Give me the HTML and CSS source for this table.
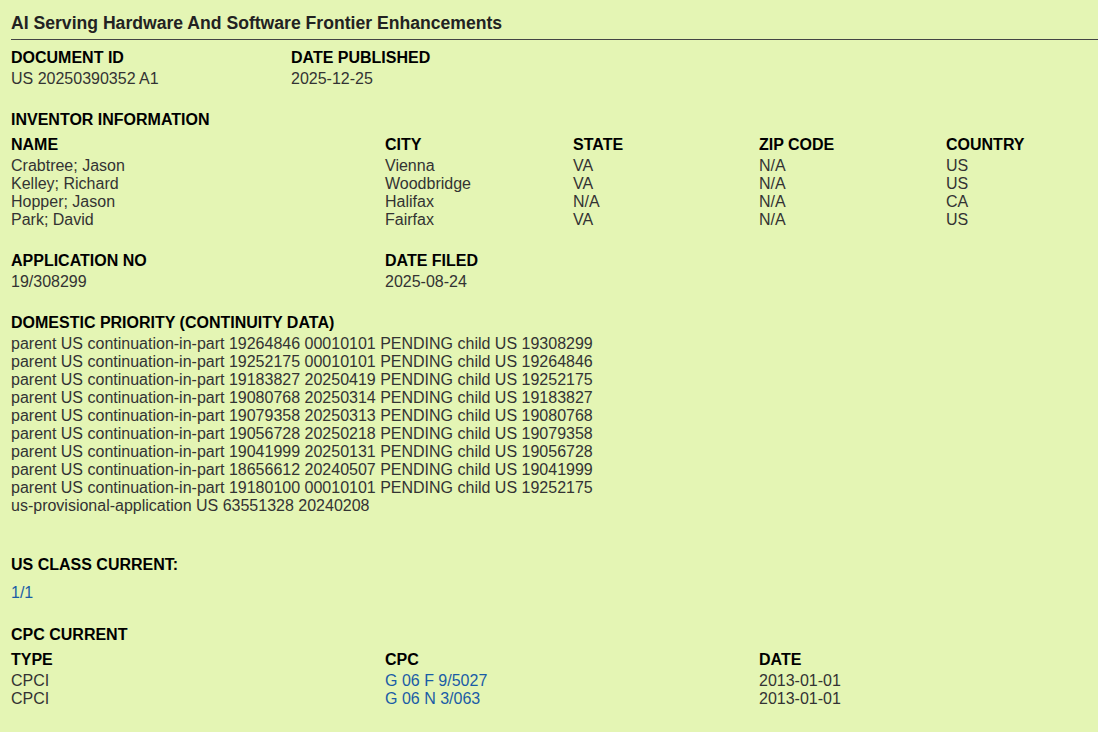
FILE: index.html
```html
<!DOCTYPE html>
<html>
<head>
<meta charset="utf-8">
<link rel="stylesheet" href="styles.css">
</head>
<body>
<div class="page">
  <h1 class="title">AI Serving Hardware And Software Frontier Enhancements</h1>

  <div class="grid grid-doc section">
    <div class="hd">DOCUMENT ID</div>
    <div class="hd">DATE PUBLISHED</div>
    <div>US 20250390352 A1</div>
    <div>2025-12-25</div>
  </div>

  <div class="sec-title">INVENTOR INFORMATION</div>
  <div class="grid grid-inv section">
    <div class="hd">NAME</div><div class="hd">CITY</div><div class="hd">STATE</div><div class="hd">ZIP CODE</div><div class="hd">COUNTRY</div>
    <div>Crabtree; Jason</div><div>Vienna</div><div>VA</div><div>N/A</div><div>US</div>
    <div>Kelley; Richard</div><div>Woodbridge</div><div>VA</div><div>N/A</div><div>US</div>
    <div>Hopper; Jason</div><div>Halifax</div><div>N/A</div><div>N/A</div><div>CA</div>
    <div>Park; David</div><div>Fairfax</div><div>VA</div><div>N/A</div><div>US</div>
  </div>

  <div class="grid grid-app section">
    <div class="hd">APPLICATION NO</div>
    <div class="hd">DATE FILED</div>
    <div>19/308299</div>
    <div>2025-08-24</div>
  </div>

  <div class="hd">DOMESTIC PRIORITY (CONTINUITY DATA)</div>
  <div class="lines section-lg">
    <div>parent US continuation-in-part 19264846 00010101 PENDING child US 19308299</div>
    <div>parent US continuation-in-part 19252175 00010101 PENDING child US 19264846</div>
    <div>parent US continuation-in-part 19183827 20250419 PENDING child US 19252175</div>
    <div>parent US continuation-in-part 19080768 20250314 PENDING child US 19183827</div>
    <div>parent US continuation-in-part 19079358 20250313 PENDING child US 19080768</div>
    <div>parent US continuation-in-part 19056728 20250218 PENDING child US 19079358</div>
    <div>parent US continuation-in-part 19041999 20250131 PENDING child US 19056728</div>
    <div>parent US continuation-in-part 18656612 20240507 PENDING child US 19041999</div>
    <div>parent US continuation-in-part 19180100 00010101 PENDING child US 19252175</div>
    <div>us-provisional-application US 63551328 20240208</div>
  </div>

  <div class="sec-title uscl">US CLASS CURRENT:</div>
  <div class="uscl-val"><a class="link" href="#">1/1</a></div>

  <div class="sec-title">CPC CURRENT</div>
  <div class="grid grid-cpc">
    <div class="hd">TYPE</div><div class="hd">CPC</div><div class="hd">DATE</div>
    <div>CPCI</div><div><a class="link" href="#">G 06 F 9/5027</a></div><div>2013-01-01</div>
    <div>CPCI</div><div><a class="link" href="#">G 06 N 3/063</a></div><div>2013-01-01</div>
  </div>
</div>
</body>
</html>
```

FILE: styles.css
```css
html, body {
  margin: 0;
  padding: 0;
  background: #e4f5b4;
}
body {
  font-family: "Liberation Sans", Arial, sans-serif;
  font-size: 16px;
  color: #333;
}
.page {
  padding: 0 0 20px 11px;
}
.title {
  font-size: 17.6px;
  font-weight: bold;
  color: #222;
  margin: 0;
  padding: 13px 0 6px;
  line-height: 20px;
  border-bottom: 1px solid #444;
}
.grid {
  display: grid;
  line-height: 18px;
}
.grid-doc {
  grid-template-columns: 280px 1fr;
  margin-top: 9px;
}
.grid-inv {
  grid-template-columns: 374px 188px 186px 187px 1fr;
}
.grid-app {
  grid-template-columns: 374px 1fr;
}
.grid-cpc {
  grid-template-columns: 374px 374px 1fr;
}
.hd {
  font-weight: bold;
  color: #000;
  line-height: 18px;
  padding-bottom: 3px;
}
.sec-title {
  font-weight: bold;
  color: #000;
  line-height: 18px;
  margin-bottom: 7px;
}
.section {
  margin-bottom: 23px;
}
.lines {
  line-height: 18px;
}
.section-lg {
  margin-bottom: 41px;
}
.uscl {
  margin-bottom: 10px;
}
.uscl-val {
  line-height: 18px;
  margin-bottom: 24px;
}
.link {
  color: #1a5ca6;
  text-decoration: none;
}
```
